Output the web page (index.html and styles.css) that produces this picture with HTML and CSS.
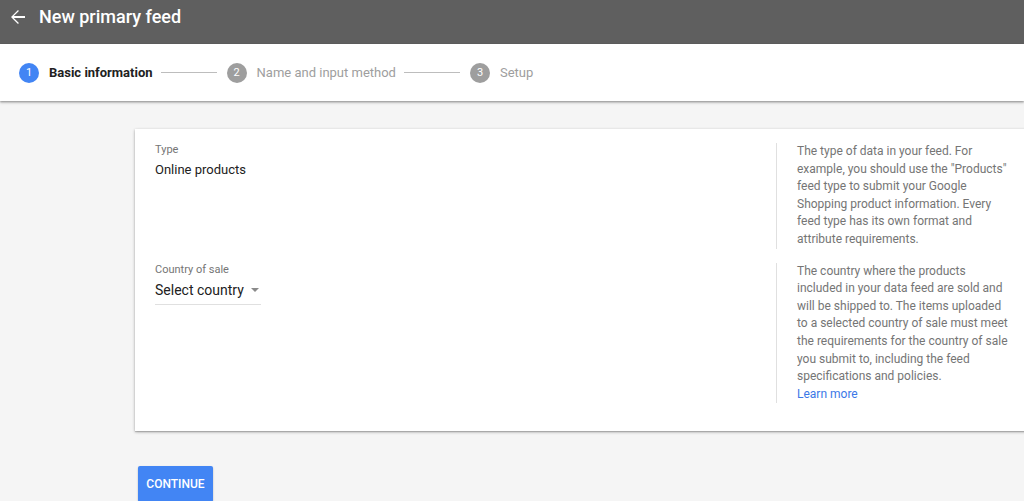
FILE: index.html
```html
<!DOCTYPE html>
<html lang="en">
<head>
<meta charset="utf-8">
<title>New primary feed</title>
<link rel="stylesheet" href="styles.css">
</head>
<body>
<header class="topbar">
  <svg class="back" width="16" height="16" viewBox="0 0 16 16" aria-hidden="true">
    <path d="M15 7H3.8l5.1-5.1L8 1 1 8l7 7 .9-.9L3.8 9H15z" fill="#fff"/>
  </svg>
  <h1 class="title">New primary feed</h1>
</header>
<nav class="stepper">
  <div class="step active"><span class="num">1</span><span class="label">Basic information</span></div>
  <span class="connector"></span>
  <div class="step"><span class="num">2</span><span class="label">Name and input method</span></div>
  <span class="connector"></span>
  <div class="step"><span class="num">3</span><span class="label">Setup</span></div>
</nav>
<main class="content">
  <section class="card">
    <div class="row">
      <div class="field">
        <div class="field-label">Type</div>
        <div class="field-value">Online products</div>
      </div>
      <p class="help">The type of data in your feed. For<br>example, you should use the "Products"<br>feed type to submit your Google<br>Shopping product information. Every<br>feed type has its own format and<br>attribute requirements.</p>
    </div>
    <div class="row">
      <div class="field">
        <div class="field-label">Country of sale</div>
        <div class="select">Select country<span class="caret"></span></div>
      </div>
      <p class="help">The country where the products<br>included in your data feed are sold and<br>will be shipped to. The items uploaded<br>to a selected country of sale must meet<br>the requirements for the country of sale<br>you submit to, including the feed<br>specifications and policies.<br><a href="#" class="link">Learn more</a></p>
    </div>
  </section>
  <button class="btn-continue">CONTINUE</button>
</main>
</body>
</html>
```

FILE: styles.css
```css
* { box-sizing: border-box; }
html, body { margin: 0; padding: 0; }
body {
  width: 1024px;
  height: 501px;
  overflow: hidden;
  background: #f5f5f5;
  font-family: Roboto, "Liberation Sans", Arial, sans-serif;
  color: #212121;
}
.topbar {
  height: 44px;
  background: #5f5f5f;
  display: flex;
  align-items: flex-start;
  padding: 9px 0 0 10px;
  gap: 13px;
}
.back { flex: none; }
.title {
  margin: -1px 0 0;
  font-size: 18px;
  line-height: 18px;
  font-weight: 500;
  color: #fff;
}
.stepper {
  height: 57px;
  background: #fff;
  display: flex;
  align-items: center;
  padding-left: 19px;
  box-shadow: 0 1px 2px rgba(0,0,0,.35), 0 2px 3px rgba(0,0,0,.12);
  position: relative;
}
.step { display: flex; align-items: center; gap: 10px; }
.num {
  width: 20px; height: 20px; border-radius: 50%;
  background: #9e9e9e; color: #fff;
  font-size: 11px; line-height: 20px; text-align: center;
}
.label { font-size: 13px; color: #9e9e9e; }
.step.active .num { background: #4285f4; }
.step.active .label { color: #212121; font-weight: 700; }
.connector {
  width: 56px; height: 1px; background: #bdbdbd;
  margin: 0 10px 0 8px;
}
.content { padding: 28px 0 0 135px; }
.card {
  width: 940px;
  background: #fff;
  padding: 14px 0 28px 20px;
  display: flex;
  flex-direction: column;
  gap: 14px;
  box-shadow: 0 1px 3px rgba(0,0,0,.3), 0 1px 1px rgba(0,0,0,.15);
}
.row { display: grid; grid-template-columns: 621px 1fr; }
.field-label { font-size: 11px; line-height: 14px; color: #757575; }
.field-value { margin-top: 4px; font-size: 13px; line-height: 18px; color: #212121; }
.select {
  margin-top: 3px;
  width: 106px;
  font-size: 14px;
  line-height: 20px;
  color: #212121;
  padding-bottom: 4px;
  border-bottom: 1px solid #e0e0e0;
  display: flex;
  align-items: center;
}
.caret {
  margin-left: 7px;
  width: 0; height: 0;
  border-left: 4px solid transparent;
  border-right: 4px solid transparent;
  border-top: 4px solid #8a8a8a;
}
.help {
  margin: 0;
  border-left: 1px solid #e0e0e0;
  padding-left: 20px;
  width: 240px;
  white-space: nowrap;
  font-size: 12px;
  line-height: 17.6px;
  color: #757575;
}
.link { color: #3b78e7; text-decoration: none; }
.btn-continue {
  margin: 35px 0 0 3px;
  width: 75px;
  height: 36px;
  border: 0;
  border-radius: 2px;
  background: #4285f4;
  color: #fff;
  font-family: Roboto, "Liberation Sans", Arial, sans-serif;
  font-size: 12px;
  font-weight: 500;
  padding: 0;
  box-shadow: 0 1px 2px rgba(0,0,0,.25);
}
```
